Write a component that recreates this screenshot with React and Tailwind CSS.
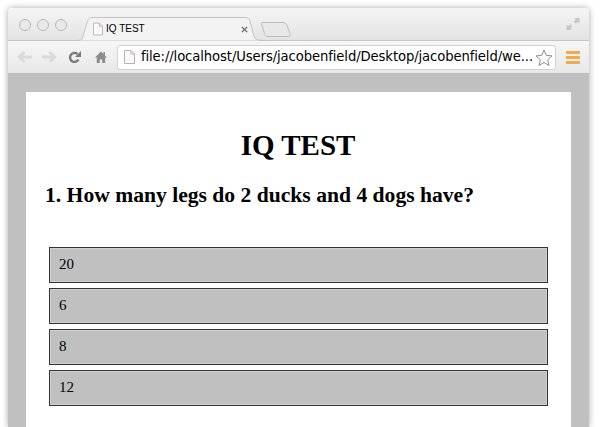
const answers = ["20", "6", "8", "12"];

const DocIcon = ({ className }) => (
    <svg viewBox="0 0 11 14" className={className} fill="#fafafa" stroke="#b4b4b4" strokeWidth="1">
        <path d="M0.5 0.5h6.5l3.5 3.5v9.5h-10z" />
        <path d="M7 0.5v3.5h3.5" fill="none" />
    </svg>
);

const App = () => {
    return (
        <div className="w-[600px] h-[427px] overflow-hidden bg-white pt-2 pl-2 pr-[11px] font-['Liberation_Serif',serif]">
            <div className="h-[419px] rounded-t-[4px] shadow-[0_0_6px_rgba(0,0,0,0.35)] flex flex-col">
                {/* tab strip */}
                <div className="h-[33px] shrink-0 rounded-t-[4px] bg-gradient-to-b from-[#f5f5f5] to-[#e3e3e3] border-b border-[#c6c6c6] flex items-end relative">
                    <div className="flex gap-[6px] ml-[11px] mb-[9px]">
                        <span className="w-[12px] h-[12px] rounded-full border border-[#b8b8b8] bg-[#e9e9e9]"></span>
                        <span className="w-[12px] h-[12px] rounded-full border border-[#b8b8b8] bg-[#e9e9e9]"></span>
                        <span className="w-[12px] h-[12px] rounded-full border border-[#b8b8b8] bg-[#e9e9e9]"></span>
                    </div>
                    <div className="relative ml-[10px] w-[188px] h-[24px] -mb-px flex items-center pl-[16px] pr-[17px]">
                        <svg viewBox="0 0 188 24" className="absolute inset-0 w-[188px] h-[24px]">
                            <path d="M0 23.5c4 0 5-1 6-4l4-14c1-3 2-5 6-5h152c3 0 4 1 5 4l4 15c1 3 3 4 11 4" fill="#f3f3f3" stroke="#c4c4c4" strokeWidth="1" />
                        </svg>
                        <DocIcon className="relative w-[10px] h-[14px] shrink-0" />
                        <span className="relative ml-[3px] text-[10px] leading-none text-black font-['Liberation_Sans',sans-serif]">IQ TEST</span>
                        <svg viewBox="0 0 8 8" className="relative ml-auto w-[7px] h-[7px]" stroke="#666" strokeWidth="1.5">
                            <path d="M1 1l6 6M7 1l-6 6" />
                        </svg>
                    </div>
                    <svg viewBox="0 0 30 15" className="-ml-[4px] mb-[3px] w-[30px] h-[15px]">
                        <path d="M1 .5h21c2 0 3 1 4 3l3 8c.5 2-.5 3-2 3H7c-2 0-3-1-3.500-3L.5 2c-.2-1 0-1.500.5-1.500z" fill="#e8e8e8" stroke="#bcbcbc" strokeWidth="1" />
                    </svg>
                    <svg viewBox="0 0 14 14" className="absolute right-[9px] top-[9px] w-[14px] h-[14px]" fill="#c6c6c6">
                        <path d="M8 1h5.500v5.500l-1.800-1.800-2 2-1.900-1.900 2-2zM.5 7.500l1.800 1.800 2-2 1.900 1.900-2 2L6 13H.5z" />
                    </svg>
                </div>
                {/* toolbar */}
                <div className="h-[32px] shrink-0 bg-gradient-to-b from-[#f6f6f6] to-[#e8e8e8] flex items-center pl-[9px] pr-[9px]">
                    <svg viewBox="0 0 15 12" className="w-[15px] h-[12px]" fill="#dadada">
                        <path d="M6.500 0L8.500 2 6 4.500h9v3H6L8.500 10 6.500 12 0 6z" />
                    </svg>
                    <svg viewBox="0 0 15 12" className="ml-[10px] w-[15px] h-[12px]" fill="#dadada">
                        <path d="M8.500 0L6.500 2 9 4.500H0v3h9L6.500 10 8.500 12 15 6z" />
                    </svg>
                    <svg viewBox="0 0 13 13" className="ml-[11px] w-[13px] h-[13px]" fill="none">
                        <path d="M10.500 8.500A4.500 4.500 0 1 1 9.500 3" stroke="#7a7a7a" strokeWidth="2.400" />
                        <path d="M13 0v6H7z" fill="#7a7a7a" />
                    </svg>
                    <svg viewBox="0 0 12 12" className="ml-[14px] w-[12px] h-[12px]" fill="#8c8c8c">
                        <path d="M6 0.500L0 6.500h1.800V12h3V8.500h2.400V12h3V6.500H12L10 4.500V1H8.500v2z" />
                    </svg>
                    <div className="ml-[10px] w-[440px] h-[25px] bg-white border border-[#d2d2d2] rounded-[3px] flex items-center pl-[6px] pr-[2px]">
                        <DocIcon className="w-[11px] h-[14px] shrink-0" />
                        <span className="ml-[6px] text-[13.2px] leading-none text-black whitespace-nowrap font-['DejaVu_Sans',sans-serif] tracking-[-0.1px]">file://localhost/Users/jacobenfield/Desktop/jacobenfield/we...</span>
                        <svg viewBox="0 0 18 17" className="ml-auto w-[18px] h-[17px] shrink-0" fill="#fff" stroke="#8e8e8e" strokeWidth="1">
                            <path d="M9 1l2.300 5.400 5.700.5-4.300 3.800 1.300 5.800L9 13.500l-5 3 1.300-5.800L1 6.900l5.700-.5z" />
                        </svg>
                    </div>
                    <div className="ml-[10px] flex flex-col gap-[2px]">
                        <span className="w-[14px] h-[3px] bg-[#f2aa4e]"></span>
                        <span className="w-[14px] h-[3px] bg-[#f2aa4e]"></span>
                        <span className="w-[14px] h-[3px] bg-[#f2aa4e]"></span>
                    </div>
                </div>
                {/* page */}
                <div className="flex-1 min-h-0 bg-[#c0c0c0] pt-[19px] px-[18px] overflow-hidden">
                    <div className="h-full bg-white pt-[36px] pl-[19px] pr-[23px] text-black">
                        <h1 className="pl-[3px] text-[29px] leading-[34px] font-bold text-center">IQ TEST</h1>
                        <h2 className="mt-[20px] text-[21.6px] leading-[26px] font-bold">1. How many legs do 2 ducks and 4 dogs have?</h2>
                        <div className="mt-[39px] ml-[4px] flex flex-col gap-[5px]">
                            {answers.map((answer) => (
                                <div key={answer} className="h-[36px] bg-[#c0c0c0] border-[1.5px] border-[#333] shadow-[inset_0_0_0_1px_#d0d0d0] pl-[9px] pb-[2px] flex items-center text-[15px]">
                                    {answer}
                                </div>
                            ))}
                        </div>
                    </div>
                </div>
            </div>
        </div>
    );
};

export default App;
